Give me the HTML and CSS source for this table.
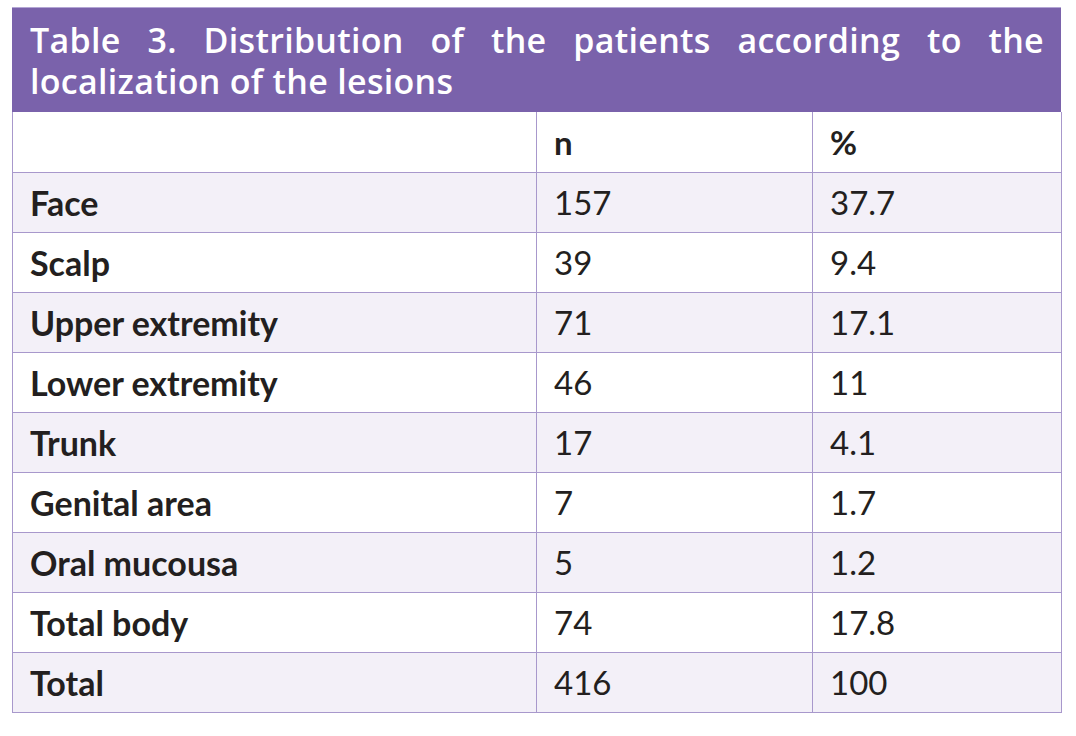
FILE: index.html
```html
<!DOCTYPE html>
<html lang="en">
<head>
<meta charset="utf-8">
<title>Table 3</title>
<link rel="stylesheet" href="styles.css">
</head>
<body>
<div class="wrap">
  <div class="caption">Table 3. Distribution of the patients according to the localization of the lesions</div>
  <table class="data">
    <colgroup>
      <col class="c1"><col class="c2"><col class="c3">
    </colgroup>
    <thead>
      <tr><th></th><th>n</th><th>%</th></tr>
    </thead>
    <tbody>
      <tr class="alt"><th>Face</th><td>157</td><td>37.7</td></tr>
      <tr><th>Scalp</th><td>39</td><td>9.4</td></tr>
      <tr class="alt"><th>Upper extremity</th><td>71</td><td>17.1</td></tr>
      <tr><th>Lower extremity</th><td>46</td><td>11</td></tr>
      <tr class="alt"><th>Trunk</th><td>17</td><td>4.1</td></tr>
      <tr><th>Genital area</th><td>7</td><td>1.7</td></tr>
      <tr class="alt"><th>Oral mucousa</th><td>5</td><td>1.2</td></tr>
      <tr><th>Total body</th><td>74</td><td>17.8</td></tr>
      <tr class="alt"><th>Total</th><td>416</td><td>100</td></tr>
    </tbody>
  </table>
</div>
</body>
</html>
```

FILE: styles.css
```css
html, body {
  margin: 0;
  padding: 0;
  background: #ffffff;
}
body {
  font-family: Lato, "Open Sans", sans-serif;
  color: #231f20;
}
.wrap {
  margin: 7px 0 0 12px;
  width: 1049px;
}
.caption {
  background: #7a62ab;
  color: #ffffff;
  font-family: "Open Sans", Lato, sans-serif;
  font-weight: 600;
  font-size: 34px;
  line-height: 41px;
  padding: 12px 17px 10px 18px;
  text-align: justify;
  border-top: 1px solid #b3a6d4;
  letter-spacing: 0.3px;
}
.data {
  width: 1049px;
  border-collapse: collapse;
  table-layout: fixed;
}
.c1 { width: 524px; }
.c2 { width: 276px; }
.c3 { width: 249px; }
.data th, .data td {
  border: 1px solid #a898cc;
  height: 60px;
  padding: 0 17px;
  text-align: left;
  vertical-align: middle;
  font-size: 33px;
  box-sizing: border-box;
}
.data th {
  font-weight: 700;
}
.data tbody th {
  font-size: 34px;
}
.data td {
  font-weight: 400;
}
.data thead th {
  background: #ffffff;
  border-top: none;
}
.data tr.alt th, .data tr.alt td {
  background: #f3f0f8;
}
```
